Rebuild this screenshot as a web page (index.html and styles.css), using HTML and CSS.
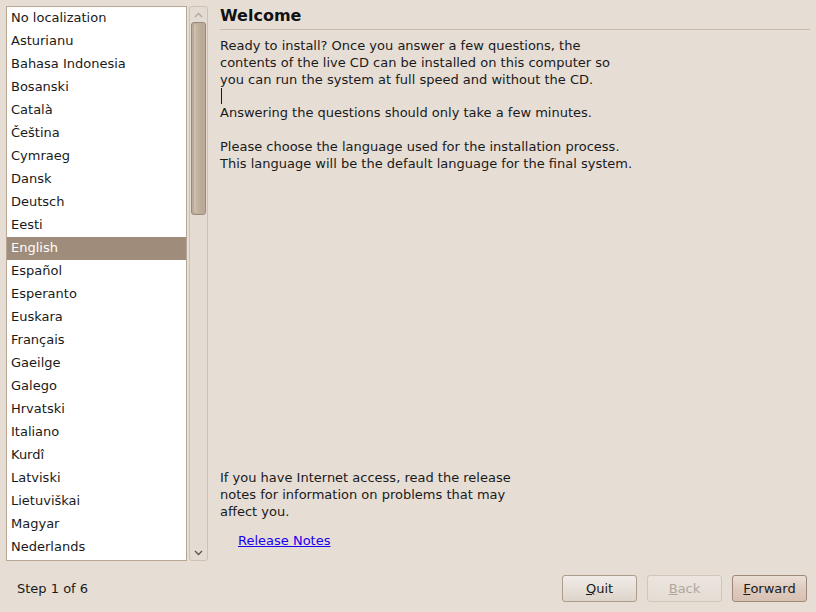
FILE: index.html
```html
<!DOCTYPE html>
<html>
<head>
<meta charset="utf-8">
<link rel="stylesheet" href="styles.css">
</head>
<body>
<div class="window">
  <div class="main">
    <div class="left">
      <div class="list">
        <div class="item">No localization</div>
        <div class="item">Asturianu</div>
        <div class="item">Bahasa Indonesia</div>
        <div class="item">Bosanski</div>
        <div class="item">Català</div>
        <div class="item">Čeština</div>
        <div class="item">Cymraeg</div>
        <div class="item">Dansk</div>
        <div class="item">Deutsch</div>
        <div class="item">Eesti</div>
        <div class="item selected">English</div>
        <div class="item">Español</div>
        <div class="item">Esperanto</div>
        <div class="item">Euskara</div>
        <div class="item">Français</div>
        <div class="item">Gaeilge</div>
        <div class="item">Galego</div>
        <div class="item">Hrvatski</div>
        <div class="item">Italiano</div>
        <div class="item">Kurdî</div>
        <div class="item">Latviski</div>
        <div class="item">Lietuviškai</div>
        <div class="item">Magyar</div>
        <div class="item">Nederlands</div>
      </div>
      <div class="scrollbar">
        <div class="arrow">
          <svg width="9" height="6" viewBox="0 0 9 6"><path d="M1 5 L4.5 1.5 L8 5" fill="none" stroke="#b0a89e" stroke-width="1.3"/></svg>
        </div>
        <div class="thumb"><div class="thumb-inner"></div></div>
        <div class="trough"></div>
        <div class="arrow">
          <svg width="9" height="6" viewBox="0 0 9 6"><path d="M1 1 L4.5 4.5 L8 1" fill="none" stroke="#5a544c" stroke-width="1.3"/></svg>
        </div>
      </div>
    </div>
    <div class="content">
      <h1 class="title">Welcome</h1>
      <div class="text">
        <p>Ready to install? Once you answer a few questions, the<br>contents of the live CD can be installed on this computer so<br>you can run the system at full speed and without the CD.<br><span class="cursor"></span></p>
        <p class="tight">Answering the questions should only take a few minutes.</p>
        <p>Please choose the language used for the installation process.<br>This language will be the default language for the final system.</p>
      </div>
      <div class="spacer"></div>
      <div class="release">
        <p>If you have Internet access, read the release<br>notes for information on problems that may<br>affect you.</p>
        <a href="#" class="link">Release Notes</a>
      </div>
    </div>
  </div>
  <div class="footer">
    <div class="step">Step 1 of 6</div>
    <div class="buttons">
      <button class="btn"><u>Q</u>uit</button>
      <button class="btn disabled"><u>B</u>ack</button>
      <button class="btn default"><u>F</u>orward</button>
    </div>
  </div>
</div>
</body>
</html>
```

FILE: styles.css
```css
html, body {
  margin: 0;
  padding: 0;
  width: 816px;
  height: 612px;
  background: #e6ded5;
  font-family: "DejaVu Sans", sans-serif;
  font-size: 13px;
  color: #1a1a1a;
  overflow: hidden;
}
.window {
  display: flex;
  flex-direction: column;
  height: 612px;
}
.main {
  display: flex;
  height: 562px;
}
.left {
  display: flex;
  padding: 6px 0 0 6px;
  gap: 2px;
  height: 556px;
  box-sizing: border-box;
}
.list {
  width: 181px;
  height: 555px;
  box-sizing: border-box;
  border: 1px solid #b7a794;
  background: #ffffff;
  overflow: hidden;
}
.item {
  height: 23px;
  line-height: 21px;
  padding-left: 4px;
  white-space: nowrap;
  color: #1a1a1a;
}
.item.selected {
  background: #a08c7a;
  color: #ffffff;
}
.scrollbar {
  width: 19px;
  height: 555px;
  box-sizing: border-box;
  border: 1px solid #cdc2b4;
  border-radius: 3px;
  background: #e4dcd2;
  display: flex;
  flex-direction: column;
  align-items: center;
  padding: 0 1px;
}
.arrow {
  height: 15px;
  display: flex;
  align-items: center;
  justify-content: center;
  flex: none;
}
.thumb {
  width: 15px;
  height: 193px;
  box-sizing: border-box;
  border: 1px solid #9c8a78;
  border-radius: 3px;
  background: #bcab99;
  padding: 1px 2px;
  flex: none;
}
.thumb-inner {
  height: 100%;
  background: linear-gradient(90deg, #cfc2b4, #c2b2a1 40%, #b9a895);
  border-radius: 2px;
}
.trough {
  flex: 1;
}
.content {
  flex: 1;
  display: flex;
  flex-direction: column;
  padding: 6px 6px 0 12px;
}
.title {
  margin: 0;
  font-size: 16px;
  font-weight: bold;
  line-height: 19px;
  padding-bottom: 4px;
  border-bottom: 1px solid #c8bcaf;
  color: #111;
}
.text {
  padding-top: 7px;
}
.text p, .release p {
  margin: 0;
  line-height: 17px;
}
.text p + p {
  margin-top: 17px;
}
.text p.tight {
  margin-top: -1px;
}
.cursor {
  display: inline-block;
  width: 1px;
  height: 16px;
  background: #1a1a1a;
  vertical-align: -3px;
  margin-left: 1px;
}
.spacer {
  flex: 1;
}
.release {
  padding-bottom: 13px;
}
.link {
  display: inline-block;
  margin-top: 12px;
  margin-left: 18px;
  color: #1a00ee;
  line-height: 17px;
}
.footer {
  flex: 1;
  display: flex;
  align-items: center;
  justify-content: space-between;
  padding: 0 9px 0 17px;
}
.step {
  padding-top: 2px;
}
.buttons {
  display: flex;
  gap: 10px;
  padding-top: 3px;
}
.btn {
  width: 75px;
  height: 27px;
  font-family: "DejaVu Sans", sans-serif;
  font-size: 13px;
  color: #1a1a1a;
  border: 1px solid #ab9c8c;
  border-radius: 3px;
  background: linear-gradient(#f1ece7, #e8e1da 50%, #ddd4ca);
  padding: 0;
}
.btn.disabled {
  color: #b0a79c;
  border-color: #d1c6ba;
  background: linear-gradient(#ebe5de, #e4ddd4);
}
.btn.default {
  border-color: #9e8878;
  background: linear-gradient(#ecdfd6, #dfcbbf 50%, #d6c0b2);
}
```
